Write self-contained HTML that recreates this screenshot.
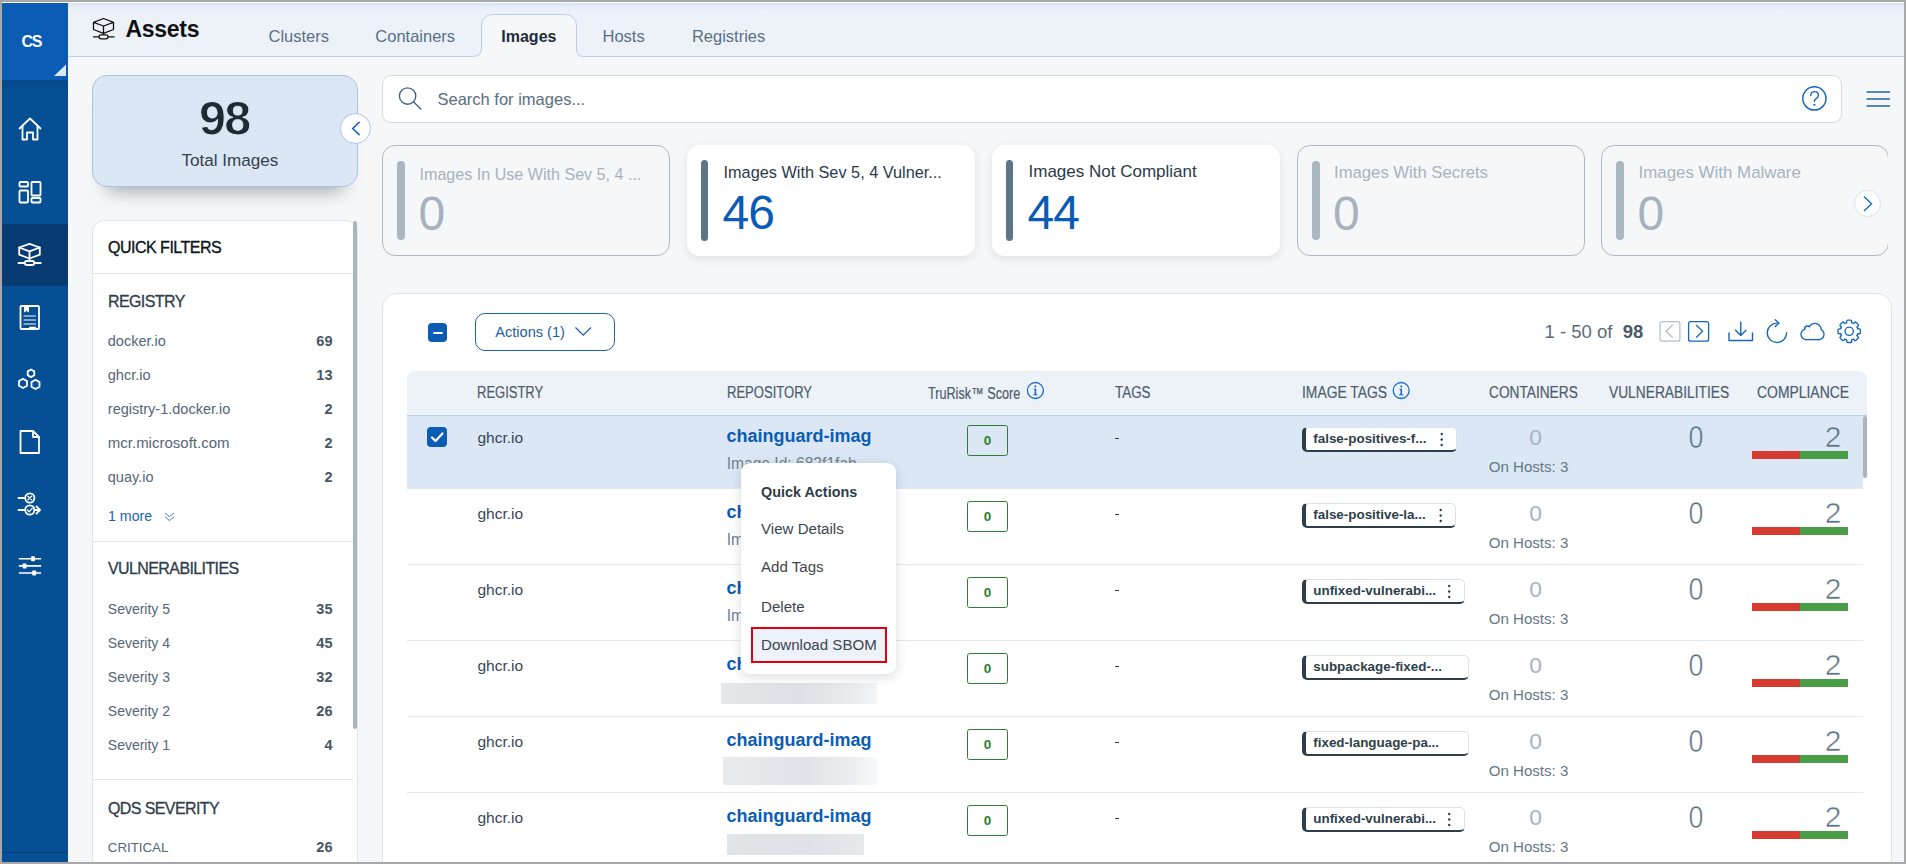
<!DOCTYPE html>
<html><head><meta charset="utf-8">
<style>
*{box-sizing:border-box;margin:0;padding:0}
html,body{width:1906px;height:864px;overflow:hidden;background:#f6f7f9;font-family:"Liberation Sans",sans-serif;position:relative}
.a{position:absolute}
.t{position:absolute;line-height:1;white-space:nowrap}
.b{font-weight:bold}
svg.i{position:absolute;left:0;top:0;overflow:visible}
.tab{color:#5a6f86;font-size:16.5px;top:28px}
.fi{color:#53667a;font-size:14.5px}
.fc{color:#475665;font-size:14.5px;font-weight:bold;text-align:right;width:60px}
.fh{color:#2f3d4b;font-size:16px;letter-spacing:-0.6px;-webkit-text-stroke:0.3px #2f3d4b}
</style></head>
<body>
<!-- header bar -->
<div class="a" style="left:68px;top:3px;width:1836px;height:54px;background:linear-gradient(#d8e4f1,#e7eef8 4px,#edf2f9 9px);border-bottom:1px solid #bdd1ea"></div>
<svg class="i" width="1906" height="70">
  <path d="M472 56.5 Q481.5 56.5 481.5 49 L481.5 26.5 Q481.5 14.5 493.5 14.5 L564.5 14.5 Q576.5 14.5 576.5 26.5 L576.5 49 Q576.5 56.5 584 56.5 L584 58 L472 58 Z" fill="#f6f7f9"/>
  <path d="M468 56.5 L472 56.5 Q481.5 56.5 481.5 49 L481.5 26.5 Q481.5 14.5 493.5 14.5 L564.5 14.5 Q576.5 14.5 576.5 26.5 L576.5 49 Q576.5 56.5 584 56.5 L588 56.5" fill="none" stroke="#b9cde6" stroke-width="1"/>
  <!-- header assets icon -->
  <g fill="none" stroke="#111" stroke-width="1.3" stroke-linejoin="round">
    <path d="M103.5 18.5 L113.5 22.3 L103.5 26 L93.5 22.3 Z"/>
    <path d="M93.5 22.3 L93.5 29.5 L103.5 33.3 L113.5 29.5 L113.5 22.3"/>
    <path d="M103.5 26 L103.5 34.5"/>
    <path d="M93 36.8 L99 36.8 M108 36.8 L114.5 36.8"/>
    <rect x="99" y="34.8" width="9" height="4" rx="2"/>
  </g>
</svg>
<div class="t b" style="left:125.5px;top:18.3px;font-size:23px;letter-spacing:-0.3px;color:#111">Assets</div>
<div class="t tab" style="left:268.5px">Clusters</div>
<div class="t tab" style="left:375.3px">Containers</div>
<div class="t tab b" style="left:501.3px;font-size:16px;top:29.1px;color:#1f2c3a">Images</div>
<div class="t tab" style="left:602.5px">Hosts</div>
<div class="t tab" style="left:691.9px">Registries</div>

<!-- sidebar -->
<div class="a" style="left:2px;top:3px;width:66px;height:859px;background:#064f95"></div>
<div class="a" style="left:2px;top:80px;width:66px;height:14px;background:linear-gradient(#05498b,#064f95)"></div>
<div class="a" style="left:2px;top:3px;width:66px;height:77px;background:#0a5cb4"></div>
<div class="a" style="left:2px;top:224px;width:66px;height:62px;background:#073b72"></div>
<div class="a" style="left:2px;top:852px;width:66px;height:1px;background:#043f7c"></div>
<div class="t b" style="left:21.6px;top:33.5px;font-size:16px;letter-spacing:-1.4px;color:#fff">CS</div>
<svg class="i" width="70" height="864">
  <path d="M54 76 L66 64.5 L66 76 Z" fill="#dbe7f5"/>
  <g fill="none" stroke="#fff" stroke-width="1.8" stroke-linejoin="round" stroke-linecap="round">
    <!-- home -->
    <path d="M19.5 128.5 L30 118.5 L40.5 128.5"/>
    <path d="M22.5 126 L22.5 139.5 L27 139.5 L27 132.5 L33 132.5 L33 139.5 L37.5 139.5 L37.5 126"/>
    <!-- dashboard -->
    <rect x="19.5" y="182" width="8.5" height="4.5" rx="0.8"/>
    <rect x="19.5" y="190.5" width="8.5" height="12" rx="0.8"/>
    <rect x="31.5" y="182" width="9" height="13.5" rx="0.8"/>
    <rect x="31.5" y="198" width="9" height="4.5" rx="0.8"/>
    <!-- assets -->
    <path d="M29.5 243.8 L39.8 247.5 L29.5 251.3 L19.2 247.5 Z"/>
    <path d="M19.2 247.5 L19.2 254.7 L29.5 258.5 L39.8 254.7 L39.8 247.5"/>
    <path d="M29.5 251.3 L29.5 260.5"/>
    <path d="M18.5 263 L24.5 263 M34.5 263 L40.8 263"/>
    <rect x="24.8" y="261" width="9.5" height="4" rx="2"/>
    <!-- reports -->
    <rect x="20.5" y="306" width="18.5" height="23" rx="1"/>
    <path d="M24.5 306.5 L24.5 312 L26.5 310.3 L28.5 312 L28.5 306.5" fill="#fff" stroke-width="1"/>
    <path d="M24 316 L35.5 316 M24 320 L35.5 320 M24 324 L35.5 324" stroke-width="1.2"/>
    <path d="M29.5 327.3 L35.5 327.3" stroke-width="1.2"/>
    <!-- hexagons -->
    <path d="M31 369.5 L34.3 371.4 L34.3 375.2 L31 377.1 L27.7 375.2 L27.7 371.4 Z"/>
    <path d="M23 378.8 L27 381.1 L27 385.7 L23 388 L19 385.7 L19 381.1 Z"/>
    <path d="M35.5 379.8 L39.5 382.1 L39.5 386.7 L35.5 389 L31.5 386.7 L31.5 382.1 Z"/>
    <!-- document -->
    <path d="M20.5 431 L33 431 L39 437 L39 453 L20.5 453 Z"/>
    <path d="M33 431 L33 437 L39 437"/>
    <!-- policies -->
    <path d="M18.5 498 L25 498 M18.5 510 L25 510 M34.5 510 L40 510 M36.5 506.5 L40 510 L36.5 513.5"/>
    <circle cx="29.8" cy="498" r="4.6"/>
    <circle cx="29.8" cy="510" r="4.6"/>
    <path d="M28 496.2 L31.6 499.8 M31.6 496.2 L28 499.8" stroke-width="1.3"/>
    <path d="M27.5 510 L29.2 511.8 L32.2 508.3" stroke-width="1.3"/>
    <!-- sliders -->
    <path d="M19.5 558.7 L40.5 558.7 M19.5 565.9 L40.5 565.9 M19.5 573 L40.5 573" stroke-width="1.6"/>
  </g>
  <g fill="#fff">
    <rect x="31" y="556.2" width="4" height="5" rx="1"/>
    <rect x="22.6" y="563.4" width="4" height="5" rx="1"/>
    <rect x="32.2" y="570.5" width="4" height="5" rx="1"/>
  </g>
</svg>

<!-- total images card -->
<div class="a" style="left:92px;top:75px;width:266px;height:112px;background:#dbe7f5;border:1px solid #a9c4e4;border-radius:15px;box-shadow:0 18px 18px -15px rgba(0,0,0,.36)"></div>
<div class="t b" style="left:199px;top:93.7px;font-size:48.5px;letter-spacing:-1.8px;color:#1e2933;-webkit-text-stroke:0.9px #dbe7f5">98</div>
<div class="t" style="left:181.5px;top:152.3px;font-size:17.1px;color:#36414c">Total Images</div>
<div class="a" style="left:340px;top:113.1px;width:30.8px;height:30.8px;border-radius:50%;background:#fff;border:1.3px solid #a9c4e4"></div>
<svg class="i" width="400" height="200"><path d="M359.2 122.3 L352.8 128.5 L359.2 134.7" fill="none" stroke="#1060bd" stroke-width="1.6" stroke-linecap="round"/></svg>

<!-- quick filters panel -->
<div class="a" style="left:92px;top:220px;width:266px;height:700px;background:#fff;border:1px solid #dfe5ea;border-radius:12px"></div>
<div class="a" style="left:93px;top:273px;width:260px;height:1px;background:#dfe6ec"></div>
<div class="a" style="left:93px;top:541px;width:260px;height:1px;background:#dfe6ec"></div>
<div class="a" style="left:93px;top:779px;width:260px;height:1px;background:#dfe6ec"></div>
<div class="a" style="left:353px;top:221px;width:4px;height:508px;background:#a9b6c0;border-radius:2px"></div>
<div class="t" style="left:108px;top:239.5px;font-size:16px;letter-spacing:-0.5px;color:#0d1620;-webkit-text-stroke:0.35px #0d1620">QUICK FILTERS</div>
<div class="t fh" style="left:108px;top:294.4px">REGISTRY</div>
<div class="t fi" style="left:107.8px;top:333.7px">docker.io</div>
<div class="t fi" style="left:107.8px;top:367.7px">ghcr.io</div>
<div class="t fi" style="left:107.8px;top:401.7px">registry-1.docker.io</div>
<div class="t fi" style="left:107.8px;top:435.3px;font-size:15px">mcr.microsoft.com</div>
<div class="t fi" style="left:107.8px;top:469.7px">quay.io</div>
<div class="t fc" style="left:272.5px;top:333.7px">69</div>
<div class="t fc" style="left:272.5px;top:367.7px">13</div>
<div class="t fc" style="left:272.5px;top:401.7px">2</div>
<div class="t fc" style="left:272.5px;top:435.7px">2</div>
<div class="t fc" style="left:272.5px;top:469.7px">2</div>
<div class="t" style="left:108px;top:508.9px;font-size:14.2px;color:#1d63b3">1 more</div>
<svg class="i" width="400" height="600"><path d="M165 513 L169.5 516.6 L174 513 M165 516.8 L169.5 520.6 L174 516.8" fill="none" stroke="#2f74c0" stroke-width="0.9"/></svg>
<div class="t fh" style="left:108px;top:561px">VULNERABILITIES</div>
<div class="t fi" style="left:107.8px;top:602.4px;font-size:14px">Severity 5</div>
<div class="t fi" style="left:107.8px;top:636.4px;font-size:14px">Severity 4</div>
<div class="t fi" style="left:107.8px;top:670.4px;font-size:14px">Severity 3</div>
<div class="t fi" style="left:107.8px;top:704.4px;font-size:14px">Severity 2</div>
<div class="t fi" style="left:107.8px;top:738.4px;font-size:14px">Severity 1</div>
<div class="t fc" style="left:272.5px;top:602.4px">35</div>
<div class="t fc" style="left:272.5px;top:636.4px">45</div>
<div class="t fc" style="left:272.5px;top:670.4px">32</div>
<div class="t fc" style="left:272.5px;top:704.4px">26</div>
<div class="t fc" style="left:272.5px;top:738.4px">4</div>
<div class="t fh" style="left:108px;top:800.5px">QDS SEVERITY</div>
<div class="t fi" style="left:107.8px;top:840.6px;font-size:13.3px">CRITICAL</div>
<div class="t fc" style="left:272.5px;top:840px">26</div>
<div class="a" style="left:382px;top:75px;width:1460px;height:47.5px;background:#fff;border:1px solid #d3dbe3;border-radius:9px"></div>
<svg class="i" width="1906" height="140">
<g fill="none" stroke="#3f6489" stroke-width="1.35" stroke-linecap="round"><circle cx="407.6" cy="96" r="8.2"/><path d="M413.6 102 L420.8 109"/></g>
<g fill="none" stroke="#1766b8" stroke-width="1.5" stroke-linecap="round"><circle cx="1814.4" cy="98.4" r="11.6"/>
<path d="M1810.8 95.5 Q1810.8 91.6 1814.6 91.6 Q1818.4 91.6 1818.4 95.3 Q1818.4 97.6 1815.8 98.8 Q1814.4 99.5 1814.4 101.5" stroke-width="1.4"/></g>
<circle cx="1814.4" cy="104.8" r="1.1" fill="#1766b8"/>
<g stroke="#1f64ad" stroke-width="1.7"><path d="M1866.5 92 L1890 92 M1866.5 99 L1890 99 M1866.5 106 L1890 106"/></g>
</svg>
<div class="t" style="left:437.5px;top:91.4px;font-size:16.5px;color:#5a6d80">Search for images...</div>
<div class="a" style="left:370px;top:135px;width:1518px;height:135px;overflow:hidden">
<div class="a" style="left:12px;top:10px;width:288px;height:111px;border:1px solid #adbac5;border-radius:13px"></div>
<div class="a" style="left:27px;top:25.5px;width:8px;height:79px;background:#a9b7c1;border-radius:4px"></div>
<div class="t" style="left:49.5px;top:30.5px;font-size:16.1px;color:#a6b3bf">Images In Use With Sev 5, 4 ...</div>
<div class="t" style="left:48.5px;top:54.900000000000006px;font-size:48px;letter-spacing:-1px;color:#a6b3bf">0</div>
<div class="a" style="left:317px;top:10px;width:288px;height:111px;background:#fff;border-radius:13px;box-shadow:0 3px 10px rgba(40,50,60,.10)"></div>
<div class="a" style="left:331px;top:25px;width:7px;height:80.5px;background:#5e7585;border-radius:3.5px"></div>
<div class="t" style="left:353.5px;top:28.900000000000006px;font-size:16.3px;color:#2b3a4a">Images With Sev 5, 4 Vulner...</div>
<div class="t" style="left:352.5px;top:54.400000000000006px;font-size:48px;letter-spacing:-1px;color:#0a5bb5">46</div>
<div class="a" style="left:622px;top:10px;width:288px;height:111px;background:#fff;border-radius:13px;box-shadow:0 3px 10px rgba(40,50,60,.10)"></div>
<div class="a" style="left:636px;top:25px;width:7px;height:80.5px;background:#5e7585;border-radius:3.5px"></div>
<div class="t" style="left:658.5px;top:28.30000000000001px;font-size:17px;color:#2b3a4a">Images Not Compliant</div>
<div class="t" style="left:657.5px;top:54.400000000000006px;font-size:48px;letter-spacing:-1px;color:#0a5bb5">44</div>
<div class="a" style="left:926.5px;top:10px;width:288px;height:111px;border:1px solid #adbac5;border-radius:13px"></div>
<div class="a" style="left:941.5px;top:25.5px;width:8px;height:79px;background:#a9b7c1;border-radius:4px"></div>
<div class="t" style="left:964.0px;top:30.0px;font-size:16.7px;color:#a6b3bf">Images With Secrets</div>
<div class="t" style="left:963.0px;top:54.900000000000006px;font-size:48px;letter-spacing:-1px;color:#a6b3bf">0</div>
<div class="a" style="left:1231px;top:10px;width:288px;height:111px;border:1px solid #adbac5;border-radius:13px"></div>
<div class="a" style="left:1246px;top:25.5px;width:8px;height:79px;background:#a9b7c1;border-radius:4px"></div>
<div class="t" style="left:1268.5px;top:29.80000000000001px;font-size:16.9px;color:#a6b3bf">Images With Malware</div>
<div class="t" style="left:1267.5px;top:54.900000000000006px;font-size:48px;letter-spacing:-1px;color:#a6b3bf">0</div>
</div>
<div class="a" style="left:1854.3px;top:190.3px;width:27px;height:27px;border-radius:50%;background:#fff;border:1px solid #d3e2f1"></div>
<svg class="i" width="1906" height="300"><path d="M1864 196.5 L1871.5 203.8 L1864 211" fill="none" stroke="#1565c0" stroke-width="1.3"/></svg>
<div class="a" style="left:382px;top:293px;width:1510px;height:620px;background:#fff;border:1px solid #dde4ea;border-radius:15px"></div>
<div class="a" style="left:428px;top:323px;width:19px;height:19px;background:#0b5cb5;border-radius:4px"></div>
<div class="a" style="left:432.5px;top:331.5px;width:10px;height:2px;background:#fff;border-radius:1px"></div>
<div class="a" style="left:475px;top:313px;width:140px;height:37.5px;border:1.5px solid #1a63b0;border-radius:10px"></div>
<div class="t" style="left:495.2px;top:324.7px;font-size:14.6px;color:#1a5fa8">Actions (1)</div>
<svg class="i" width="1906" height="400"><path d="M575.5 327.5 L583.2 335.2 L591 327.5" fill="none" stroke="#1a5fa8" stroke-width="1.25"/></svg>
<div class="t" style="left:1544.5px;top:323.3px;font-size:18.5px;color:#5b6b7a">1 - 50 of&nbsp; <b style="color:#4a5966">98</b></div>
<svg class="i" width="1906" height="400">
<rect x="1660.1" y="321.6" width="19.8" height="19.6" rx="2" fill="none" stroke="#b3c1cc" stroke-width="1.25"/>
<path d="M1672.6 325 L1666.2 331.3 L1672.6 337.5" fill="none" stroke="#aab8c4" stroke-width="1.2"/>
<rect x="1688.6" y="321.6" width="20" height="19.6" rx="2" fill="none" stroke="#1766b8" stroke-width="1.3"/>
<path d="M1696.2 325 L1702.6 331.3 L1696.2 337.5" fill="none" stroke="#1766b8" stroke-width="1.25"/>
<g fill="none" stroke="#1766b8" stroke-width="1.4" stroke-linejoin="round" stroke-linecap="round">
<path d="M1729 333 L1729 340.5 L1752.5 340.5 L1752.5 333"/>
<path d="M1740.8 322 L1740.8 335.5 M1735.5 330.3 L1740.8 335.5 L1746 330.3"/>
<path d="M1786.6 332.8 A9.7 9.7 0 1 1 1777 323.1" stroke-width="1.4"/>
<path d="M1775.3 319.8 L1778.9 323.2 L1775.3 326.6" stroke-width="1.4"/>
</g>
<g fill="#1766b8" stroke="#1766b8" stroke-width="2.7">
<circle cx="1806.3" cy="334.3" r="4.65"/><circle cx="1818.7" cy="334.3" r="4.65"/><circle cx="1814.9" cy="329.6" r="5.6"/><circle cx="1807.6" cy="329" r="2.3"/><rect x="1806.3" y="332" width="12.4" height="6.95"/>
</g>
<g fill="#fff">
<circle cx="1806.3" cy="334.3" r="4.65"/><circle cx="1818.7" cy="334.3" r="4.65"/><circle cx="1814.9" cy="329.6" r="5.6"/><circle cx="1807.6" cy="329" r="2.3"/><rect x="1806.3" y="332" width="12.4" height="6.95"/>
</g>
</svg>
<svg class="i" width="1906" height="400"><g fill="#1766b8" stroke="#1766b8" stroke-width="2.7" stroke-linejoin="round"><circle cx="1849.2" cy="331.3" r="8.3"/><rect x="1847.4" y="320.8" width="3.6" height="4" rx="0.4" transform="rotate(0 1849.2 331.3)"/><rect x="1847.4" y="320.8" width="3.6" height="4" rx="0.4" transform="rotate(45 1849.2 331.3)"/><rect x="1847.4" y="320.8" width="3.6" height="4" rx="0.4" transform="rotate(90 1849.2 331.3)"/><rect x="1847.4" y="320.8" width="3.6" height="4" rx="0.4" transform="rotate(135 1849.2 331.3)"/><rect x="1847.4" y="320.8" width="3.6" height="4" rx="0.4" transform="rotate(180 1849.2 331.3)"/><rect x="1847.4" y="320.8" width="3.6" height="4" rx="0.4" transform="rotate(225 1849.2 331.3)"/><rect x="1847.4" y="320.8" width="3.6" height="4" rx="0.4" transform="rotate(270 1849.2 331.3)"/><rect x="1847.4" y="320.8" width="3.6" height="4" rx="0.4" transform="rotate(315 1849.2 331.3)"/></g><g fill="#fff"><circle cx="1849.2" cy="331.3" r="8.3"/><rect x="1847.4" y="320.8" width="3.6" height="4" rx="0.4" transform="rotate(0 1849.2 331.3)"/><rect x="1847.4" y="320.8" width="3.6" height="4" rx="0.4" transform="rotate(45 1849.2 331.3)"/><rect x="1847.4" y="320.8" width="3.6" height="4" rx="0.4" transform="rotate(90 1849.2 331.3)"/><rect x="1847.4" y="320.8" width="3.6" height="4" rx="0.4" transform="rotate(135 1849.2 331.3)"/><rect x="1847.4" y="320.8" width="3.6" height="4" rx="0.4" transform="rotate(180 1849.2 331.3)"/><rect x="1847.4" y="320.8" width="3.6" height="4" rx="0.4" transform="rotate(225 1849.2 331.3)"/><rect x="1847.4" y="320.8" width="3.6" height="4" rx="0.4" transform="rotate(270 1849.2 331.3)"/><rect x="1847.4" y="320.8" width="3.6" height="4" rx="0.4" transform="rotate(315 1849.2 331.3)"/></g><circle cx="1849.2" cy="331.3" r="4.1" fill="none" stroke="#1766b8" stroke-width="1.35"/></svg>
<div class="a" style="left:407px;top:371px;width:1460px;height:45px;background:#edf2f9;border-radius:8px 8px 0 0;border-bottom:1px solid #bcd0e8"></div>
<div class="t" style="left:477.3px;top:384.9px;font-size:16px;color:#4f5d6b;-webkit-text-stroke:0.2px #4f5d6b;transform:scaleX(0.812);transform-origin:0 0">REGISTRY</div>
<div class="t" style="left:727px;top:384.9px;font-size:16px;color:#4f5d6b;-webkit-text-stroke:0.2px #4f5d6b;transform:scaleX(0.815);transform-origin:0 0">REPOSITORY</div>
<div class="t" style="left:928.1px;top:386.09999999999997px;font-size:16px;color:#4f5d6b;-webkit-text-stroke:0.2px #4f5d6b;transform:scaleX(0.79);transform-origin:0 0">TruRisk™ Score</div>
<div class="t" style="left:1115.3px;top:384.9px;font-size:16px;color:#4f5d6b;-webkit-text-stroke:0.2px #4f5d6b;transform:scaleX(0.838);transform-origin:0 0">TAGS</div>
<div class="t" style="left:1302px;top:384.9px;font-size:16px;color:#4f5d6b;-webkit-text-stroke:0.2px #4f5d6b;transform:scaleX(0.866);transform-origin:0 0">IMAGE TAGS</div>
<div class="t" style="left:1488.7px;top:384.9px;font-size:16px;color:#4f5d6b;-webkit-text-stroke:0.2px #4f5d6b;transform:scaleX(0.856);transform-origin:0 0">CONTAINERS</div>
<div class="t" style="left:1609px;top:384.9px;font-size:16px;color:#4f5d6b;-webkit-text-stroke:0.2px #4f5d6b;transform:scaleX(0.86);transform-origin:0 0">VULNERABILITIES</div>
<div class="t" style="left:1757px;top:384.9px;font-size:16px;color:#4f5d6b;-webkit-text-stroke:0.2px #4f5d6b;transform:scaleX(0.87);transform-origin:0 0">COMPLIANCE</div>
<svg class="i" width="1906" height="450"><g fill="none" stroke="#1a6cc0" stroke-width="1.3"><circle cx="1035.4" cy="390.5" r="8"/><circle cx="1401.2" cy="390.5" r="8"/></g>
<g fill="#1a6cc0"><circle cx="1035.4" cy="386.4" r="1"/><rect x="1034.6" y="388.8" width="1.6" height="6.2"/><rect x="1033.2" y="394.3" width="4.4" height="1"/><rect x="1033.6" y="388.8" width="2.6" height="0.9"/>
<circle cx="1401.2" cy="386.4" r="1"/><rect x="1400.4" y="388.8" width="1.6" height="6.2"/><rect x="1399" y="394.3" width="4.4" height="1"/><rect x="1399.4" y="388.8" width="2.6" height="0.9"/></g></svg>
<div class="a" style="left:407px;top:416px;width:1456px;height:72px;background:#dbe7f5"></div>
<div class="a" style="left:427.3px;top:427.3px;width:20px;height:20px;background:#0b5cb5;border-radius:4px"></div>
<svg class="i" width="1906" height="864"><path d="M432 437.5 L435.5 441 L442.5 433.5" fill="none" stroke="#fff" stroke-width="2.2" stroke-linecap="round" stroke-linejoin="round"/></svg>
<div class="t" style="left:477.5px;top:429.9px;font-size:15.5px;color:#3a4653">ghcr.io</div>
<div class="a" style="left:726.5px;top:422px;width:144.5px;height:26px;overflow:hidden"><div class="t b" style="left:0;top:5.3px;font-size:18px;color:#0b5cb5">chainguard-images</div></div>
<div class="a" style="left:967px;top:425px;width:41px;height:30.6px;border:1.3px solid #2e7d32;border-radius:2.5px"></div>
<div class="t b" style="left:967px;width:41px;text-align:center;top:433.5px;font-size:13.5px;color:#2e7d32">0</div>
<div class="a" style="left:1114.6px;top:438.2px;width:4.6px;height:1.3px;background:#34414d"></div>
<div class="a" style="left:1302px;top:427px;width:155px;height:24.8px;background:#fff;border:1px solid #dde2e7;border-left:4.5px solid #2e3e4b;border-bottom:2.2px solid #2e3e4b;border-radius:5px"></div>
<div class="t b" style="left:1313.3px;top:432.2px;font-size:13.4px;color:#2e3f4c">false-positives-f...</div>
<svg class="i" width="1906" height="864"><g fill="#2e3f4c"><circle cx="1441.7" cy="434" r="1.2"/><circle cx="1441.7" cy="439.5" r="1.2"/><circle cx="1441.7" cy="445" r="1.2"/></g></svg>
<div class="t" style="left:1495px;width:81px;text-align:center;top:425.6px;font-size:22.8px;color:#a6b3bd">0</div>
<div class="t" style="left:1488.7px;top:458.9px;font-size:15.1px;color:#62798a">On Hosts: 3</div>
<div class="t" style="left:1646px;width:100px;text-align:center;top:421.5px;font-size:30.5px;color:#5b7384;-webkit-text-stroke:0.55px #dbe7f5;transform:scaleX(0.88)">0</div>
<div class="t" style="left:1740px;width:101.5px;text-align:right;top:421.9px;font-size:30px;color:#5b7384;-webkit-text-stroke:0.55px #dbe7f5">2</div>
<div class="a" style="left:1752px;top:451px;width:48px;height:7.8px;background:#d63b30"></div>
<div class="a" style="left:1800px;top:451px;width:48px;height:7.8px;background:#4a9e47"></div>
<div class="t" style="left:726.7px;top:455.8px;font-size:15.6px;color:#6f8191">Image Id: 682f1fab</div>
<div class="t" style="left:477.5px;top:505.9px;font-size:15.5px;color:#3a4653">ghcr.io</div>
<div class="a" style="left:726.5px;top:498px;width:144.5px;height:26px;overflow:hidden"><div class="t b" style="left:0;top:5.3px;font-size:18px;color:#0b5cb5">chainguard-images</div></div>
<div class="a" style="left:967px;top:501px;width:41px;height:30.6px;border:1.3px solid #2e7d32;border-radius:2.5px"></div>
<div class="t b" style="left:967px;width:41px;text-align:center;top:509.5px;font-size:13.5px;color:#2e7d32">0</div>
<div class="a" style="left:1114.6px;top:514.2px;width:4.6px;height:1.3px;background:#34414d"></div>
<div class="a" style="left:1302px;top:503px;width:154px;height:24.8px;background:#fff;border:1px solid #dde2e7;border-left:4.5px solid #2e3e4b;border-bottom:2.2px solid #2e3e4b;border-radius:5px"></div>
<div class="t b" style="left:1313.3px;top:508.2px;font-size:13.4px;color:#2e3f4c">false-positive-la...</div>
<svg class="i" width="1906" height="864"><g fill="#2e3f4c"><circle cx="1440.7" cy="510" r="1.2"/><circle cx="1440.7" cy="515.5" r="1.2"/><circle cx="1440.7" cy="521" r="1.2"/></g></svg>
<div class="t" style="left:1495px;width:81px;text-align:center;top:501.6px;font-size:22.8px;color:#a6b3bd">0</div>
<div class="t" style="left:1488.7px;top:534.9px;font-size:15.1px;color:#62798a">On Hosts: 3</div>
<div class="t" style="left:1646px;width:100px;text-align:center;top:497.5px;font-size:30.5px;color:#5b7384;-webkit-text-stroke:0.55px #ffffff;transform:scaleX(0.88)">0</div>
<div class="t" style="left:1740px;width:101.5px;text-align:right;top:497.9px;font-size:30px;color:#5b7384;-webkit-text-stroke:0.55px #ffffff">2</div>
<div class="a" style="left:1752px;top:527px;width:48px;height:7.8px;background:#d63b30"></div>
<div class="a" style="left:1800px;top:527px;width:48px;height:7.8px;background:#4a9e47"></div>
<div class="t" style="left:726.7px;top:531.8px;font-size:15.6px;color:#6f8191">Image Id: 682f1fab</div>
<div class="t" style="left:477.5px;top:581.9px;font-size:15.5px;color:#3a4653">ghcr.io</div>
<div class="a" style="left:726.5px;top:574px;width:144.5px;height:26px;overflow:hidden"><div class="t b" style="left:0;top:5.3px;font-size:18px;color:#0b5cb5">chainguard-images</div></div>
<div class="a" style="left:967px;top:577px;width:41px;height:30.6px;border:1.3px solid #2e7d32;border-radius:2.5px"></div>
<div class="t b" style="left:967px;width:41px;text-align:center;top:585.5px;font-size:13.5px;color:#2e7d32">0</div>
<div class="a" style="left:1114.6px;top:590.2px;width:4.6px;height:1.3px;background:#34414d"></div>
<div class="a" style="left:1302px;top:579px;width:162.5px;height:24.8px;background:#fff;border:1px solid #dde2e7;border-left:4.5px solid #2e3e4b;border-bottom:2.2px solid #2e3e4b;border-radius:5px"></div>
<div class="t b" style="left:1313.3px;top:584.2px;font-size:13.4px;color:#2e3f4c">unfixed-vulnerabi...</div>
<svg class="i" width="1906" height="864"><g fill="#2e3f4c"><circle cx="1449.2" cy="586" r="1.2"/><circle cx="1449.2" cy="591.5" r="1.2"/><circle cx="1449.2" cy="597" r="1.2"/></g></svg>
<div class="t" style="left:1495px;width:81px;text-align:center;top:577.6px;font-size:22.8px;color:#a6b3bd">0</div>
<div class="t" style="left:1488.7px;top:610.9px;font-size:15.1px;color:#62798a">On Hosts: 3</div>
<div class="t" style="left:1646px;width:100px;text-align:center;top:573.5px;font-size:30.5px;color:#5b7384;-webkit-text-stroke:0.55px #ffffff;transform:scaleX(0.88)">0</div>
<div class="t" style="left:1740px;width:101.5px;text-align:right;top:573.9px;font-size:30px;color:#5b7384;-webkit-text-stroke:0.55px #ffffff">2</div>
<div class="a" style="left:1752px;top:603px;width:48px;height:7.8px;background:#d63b30"></div>
<div class="a" style="left:1800px;top:603px;width:48px;height:7.8px;background:#4a9e47"></div>
<div class="t" style="left:726.7px;top:607.8px;font-size:15.6px;color:#6f8191">Image Id: 682f1fab</div>
<div class="t" style="left:477.5px;top:657.9px;font-size:15.5px;color:#3a4653">ghcr.io</div>
<div class="a" style="left:726.5px;top:650px;width:144.5px;height:26px;overflow:hidden"><div class="t b" style="left:0;top:5.3px;font-size:18px;color:#0b5cb5">chainguard-images</div></div>
<div class="a" style="left:967px;top:653px;width:41px;height:30.6px;border:1.3px solid #2e7d32;border-radius:2.5px"></div>
<div class="t b" style="left:967px;width:41px;text-align:center;top:661.5px;font-size:13.5px;color:#2e7d32">0</div>
<div class="a" style="left:1114.6px;top:666.2px;width:4.6px;height:1.3px;background:#34414d"></div>
<div class="a" style="left:1302px;top:655px;width:167px;height:24.8px;background:#fff;border:1px solid #dde2e7;border-left:4.5px solid #2e3e4b;border-bottom:2.2px solid #2e3e4b;border-radius:5px"></div>
<div class="t b" style="left:1313.3px;top:660.2px;font-size:13.4px;color:#2e3f4c">subpackage-fixed-...</div>
<div class="t" style="left:1495px;width:81px;text-align:center;top:653.6px;font-size:22.8px;color:#a6b3bd">0</div>
<div class="t" style="left:1488.7px;top:686.9px;font-size:15.1px;color:#62798a">On Hosts: 3</div>
<div class="t" style="left:1646px;width:100px;text-align:center;top:649.5px;font-size:30.5px;color:#5b7384;-webkit-text-stroke:0.55px #ffffff;transform:scaleX(0.88)">0</div>
<div class="t" style="left:1740px;width:101.5px;text-align:right;top:649.9px;font-size:30px;color:#5b7384;-webkit-text-stroke:0.55px #ffffff">2</div>
<div class="a" style="left:1752px;top:679px;width:48px;height:7.8px;background:#d63b30"></div>
<div class="a" style="left:1800px;top:679px;width:48px;height:7.8px;background:#4a9e47"></div>
<div class="t" style="left:477.5px;top:733.9px;font-size:15.5px;color:#3a4653">ghcr.io</div>
<div class="a" style="left:726.5px;top:726px;width:144.5px;height:26px;overflow:hidden"><div class="t b" style="left:0;top:5.3px;font-size:18px;color:#0b5cb5">chainguard-images</div></div>
<div class="a" style="left:967px;top:729px;width:41px;height:30.6px;border:1.3px solid #2e7d32;border-radius:2.5px"></div>
<div class="t b" style="left:967px;width:41px;text-align:center;top:737.5px;font-size:13.5px;color:#2e7d32">0</div>
<div class="a" style="left:1114.6px;top:742.2px;width:4.6px;height:1.3px;background:#34414d"></div>
<div class="a" style="left:1302px;top:731px;width:167px;height:24.8px;background:#fff;border:1px solid #dde2e7;border-left:4.5px solid #2e3e4b;border-bottom:2.2px solid #2e3e4b;border-radius:5px"></div>
<div class="t b" style="left:1313.3px;top:736.2px;font-size:13.4px;color:#2e3f4c">fixed-language-pa...</div>
<div class="t" style="left:1495px;width:81px;text-align:center;top:729.6px;font-size:22.8px;color:#a6b3bd">0</div>
<div class="t" style="left:1488.7px;top:762.9px;font-size:15.1px;color:#62798a">On Hosts: 3</div>
<div class="t" style="left:1646px;width:100px;text-align:center;top:725.5px;font-size:30.5px;color:#5b7384;-webkit-text-stroke:0.55px #ffffff;transform:scaleX(0.88)">0</div>
<div class="t" style="left:1740px;width:101.5px;text-align:right;top:725.9px;font-size:30px;color:#5b7384;-webkit-text-stroke:0.55px #ffffff">2</div>
<div class="a" style="left:1752px;top:755px;width:48px;height:7.8px;background:#d63b30"></div>
<div class="a" style="left:1800px;top:755px;width:48px;height:7.8px;background:#4a9e47"></div>
<div class="t" style="left:477.5px;top:809.9px;font-size:15.5px;color:#3a4653">ghcr.io</div>
<div class="a" style="left:726.5px;top:802px;width:144.5px;height:26px;overflow:hidden"><div class="t b" style="left:0;top:5.3px;font-size:18px;color:#0b5cb5">chainguard-images</div></div>
<div class="a" style="left:967px;top:805px;width:41px;height:30.6px;border:1.3px solid #2e7d32;border-radius:2.5px"></div>
<div class="t b" style="left:967px;width:41px;text-align:center;top:813.5px;font-size:13.5px;color:#2e7d32">0</div>
<div class="a" style="left:1114.6px;top:818.2px;width:4.6px;height:1.3px;background:#34414d"></div>
<div class="a" style="left:1302px;top:807px;width:162.5px;height:24.8px;background:#fff;border:1px solid #dde2e7;border-left:4.5px solid #2e3e4b;border-bottom:2.2px solid #2e3e4b;border-radius:5px"></div>
<div class="t b" style="left:1313.3px;top:812.2px;font-size:13.4px;color:#2e3f4c">unfixed-vulnerabi...</div>
<svg class="i" width="1906" height="864"><g fill="#2e3f4c"><circle cx="1449.2" cy="814" r="1.2"/><circle cx="1449.2" cy="819.5" r="1.2"/><circle cx="1449.2" cy="825" r="1.2"/></g></svg>
<div class="t" style="left:1495px;width:81px;text-align:center;top:805.6px;font-size:22.8px;color:#a6b3bd">0</div>
<div class="t" style="left:1488.7px;top:838.9px;font-size:15.1px;color:#62798a">On Hosts: 3</div>
<div class="t" style="left:1646px;width:100px;text-align:center;top:801.5px;font-size:30.5px;color:#5b7384;-webkit-text-stroke:0.55px #ffffff;transform:scaleX(0.88)">0</div>
<div class="t" style="left:1740px;width:101.5px;text-align:right;top:801.9px;font-size:30px;color:#5b7384;-webkit-text-stroke:0.55px #ffffff">2</div>
<div class="a" style="left:1752px;top:831px;width:48px;height:7.8px;background:#d63b30"></div>
<div class="a" style="left:1800px;top:831px;width:48px;height:7.8px;background:#4a9e47"></div>
<div class="a" style="left:407px;top:488px;width:1456px;height:1px;background:#e3e8ed"></div>
<div class="a" style="left:407px;top:564px;width:1456px;height:1px;background:#e3e8ed"></div>
<div class="a" style="left:407px;top:640px;width:1456px;height:1px;background:#e3e8ed"></div>
<div class="a" style="left:407px;top:716px;width:1456px;height:1px;background:#e3e8ed"></div>
<div class="a" style="left:407px;top:792px;width:1456px;height:1px;background:#e3e8ed"></div>
<div class="a" style="left:720.5px;top:683px;width:156px;height:21px;background:linear-gradient(90deg,#e4e8eb,#dde1e5 50%,#e9ecef 85%,#f4f6f7)"></div>
<div class="a" style="left:723px;top:757px;width:154px;height:27.5px;background:linear-gradient(90deg,#e8ebee,#e0e4e8 55%,#eceff1 85%,#f7f8f9)"></div>
<div class="a" style="left:727px;top:834px;width:137px;height:21px;background:linear-gradient(90deg,#e1e5e8,#dfe3e7 60%,#e6e9ec)"></div>
<div class="a" style="left:1863.3px;top:416.2px;width:3.5px;height:61.5px;background:#a9b5bf;border-radius:2px"></div>
<div class="a" style="left:741px;top:463px;width:155px;height:210.5px;background:#fff;border-radius:9px;box-shadow:0 3px 12px rgba(30,40,50,.16)"></div>
<div class="a" style="left:751px;top:627px;width:136px;height:36px;background:#edf2fa;border:2.4px solid #e0000f"></div>
<div class="t b" style="left:761px;top:484.5px;font-size:14.4px;color:#2f3d4a">Quick Actions</div>
<div class="t" style="left:761px;top:521.4px;font-size:15.1px;color:#3b4650">View Details</div>
<div class="t" style="left:761px;top:559.4px;font-size:15.1px;color:#3b4650">Add Tags</div>
<div class="t" style="left:761px;top:598.9px;font-size:15.1px;color:#3b4650">Delete</div>
<div class="t" style="left:761px;top:636.6px;font-size:15.1px;color:#3b4650">Download SBOM</div>
<div class="a" style="left:0;top:2px;width:1906px;height:1px;background:#fff"></div>
<div class="a" style="left:0;top:0;width:1906px;height:2px;background:#a8a8a8"></div>
<div class="a" style="left:0;top:862px;width:1906px;height:2px;background:#a8a8a8"></div>
<div class="a" style="left:0;top:0;width:2px;height:864px;background:#a8a8a8"></div>
<div class="a" style="left:1904px;top:0;width:2px;height:864px;background:#a8a8a8"></div>
</body></html>
